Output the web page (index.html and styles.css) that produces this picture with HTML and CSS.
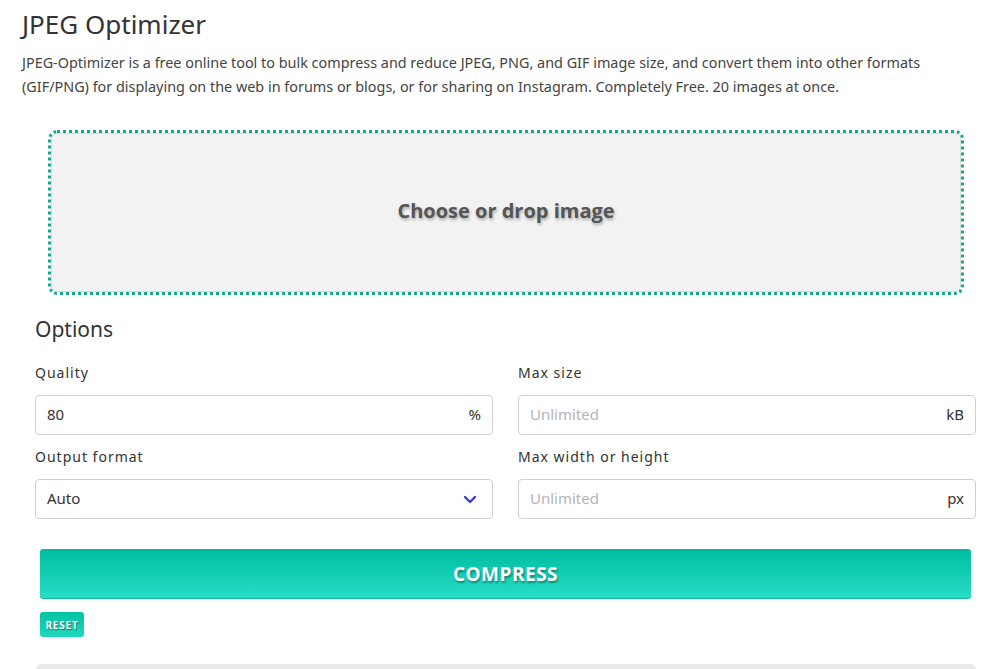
FILE: index.html
```html
<!DOCTYPE html>
<html lang="en">
<head>
  <meta charset="UTF-8">
  <meta name="viewport" content="width=device-width, initial-scale=1.0">
  <title>JPEG Optimizer</title>
  <link rel="stylesheet" href="styles.css">
</head>
<body>
  <div class="page">
    <div class="intro">
      <h1>JPEG Optimizer</h1>
      <p>JPEG-Optimizer is a free online tool to bulk compress and reduce JPEG, PNG, and GIF image size, and convert them into other formats (GIF/PNG) for displaying on the web in forums or blogs, or for sharing on Instagram. Completely Free. 20 images at once.</p>
    </div>

    <div class="drop-wrap">
      <label class="drop-zone">
        <span>Choose or drop image</span>
      </label>
    </div>

    <div class="options">
      <h2>Options</h2>
      <div class="grid">
        <div class="field">
          <label>Quality</label>
          <div class="input-box">
            <input type="text" value="80">
            <span class="unit">%</span>
          </div>
        </div>
        <div class="field">
          <label>Max size</label>
          <div class="input-box">
            <input type="text" placeholder="Unlimited">
            <span class="unit">kB</span>
          </div>
        </div>
        <div class="field">
          <label>Output format</label>
          <div class="input-box">
            <span class="select-value">Auto</span>
            <svg class="chevron" width="14" height="9" viewBox="0 0 14 9">
              <path d="M2 2 L7 7 L12 2" fill="none" stroke="#3a3fc4" stroke-width="2.4" stroke-linecap="round" stroke-linejoin="round"/>
            </svg>
          </div>
        </div>
        <div class="field">
          <label>Max width or height</label>
          <div class="input-box">
            <input type="text" placeholder="Unlimited">
            <span class="unit">px</span>
          </div>
        </div>
      </div>

      <button class="btn-compress">COMPRESS</button>
      <button class="btn-reset">RESET</button>
    </div>

    <div class="results"></div>
  </div>
</body>
</html>
```

FILE: styles.css
```css
body {
  margin: 0;
  font-family: "Noto Sans", "Noto Sans CJK KR", sans-serif;
  color: #333;
  background-color: white;
  overflow: hidden;
}
.page {
  width: 996px;
}
.intro {
  padding: 7px 20px 0 22px;
}
.intro h1 {
  margin: 0;
  font-size: 26px;
  font-weight: 400;
  line-height: 34px;
  color: #333;
}
.intro p {
  margin: 10px 0 0 0;
  font-size: 14.4px;
  line-height: 24px;
  color: #444;
}
.drop-wrap {
  padding: 34px 35px 0 51px;
}
.drop-zone {
  display: flex;
  justify-content: center;
  align-items: center;
  height: 157px;
  background-color: #f2f2f2;
  border: 1px solid #dcdcdc;
  border-radius: 6px;
  outline: 3px dotted #13a88b;
  outline-offset: 0;
  cursor: pointer;
}
.drop-zone span {
  font-family: "Open Sans", sans-serif;
  font-size: 20px;
  font-weight: 700;
  color: #555;
  margin-bottom: 4px;
  text-shadow: 1px 2px 3px rgba(0, 0, 0, 0.3);
}
.options {
  padding: 22px 20px 0 35px;
}
.options h2 {
  margin: 0;
  font-size: 21px;
  font-weight: 400;
  line-height: 30px;
  color: #333;
}
.grid {
  display: grid;
  grid-template-columns: 1fr 1fr;
  column-gap: 25px;
  row-gap: 12px;
  margin-top: 19px;
}
.field label {
  display: block;
  font-size: 14px;
  letter-spacing: 1px;
  line-height: 20px;
  color: #333;
  margin-bottom: 12px;
}
.input-box {
  display: flex;
  align-items: center;
  box-sizing: border-box;
  height: 40px;
  border: 1px solid #d0d0d0;
  border-radius: 4px;
  padding: 0 11px 3px 11px;
  background-color: white;
}
.input-box input {
  flex: 1;
  border: none;
  outline: none;
  font-family: inherit;
  font-size: 15px;
  color: #333;
  padding: 0;
  background: transparent;
}
.input-box input::placeholder {
  color: #b5b5b5;
}
.unit {
  font-size: 15px;
  color: #333;
}
.select-value {
  flex: 1;
  font-size: 15px;
  color: #333;
}
.chevron {
  margin-right: 4px;
  margin-top: 3px;
}
.btn-compress {
  display: block;
  width: 931px;
  height: 50px;
  margin: 30px 0 0 5px;
  border: none;
  border-bottom: 1px solid #12b89b;
  border-radius: 3px;
  background: linear-gradient(to bottom, #00bd9f, #27ddc6);
  color: white;
  font-family: "Open Sans", sans-serif;
  font-size: 19px;
  font-weight: 700;
  letter-spacing: 0.5px;
  text-shadow: 1px 2px 2px rgba(0, 0, 0, 0.35);
  cursor: pointer;
}
.btn-reset {
  display: block;
  width: 44px;
  height: 25px;
  margin: 13px 0 0 5px;
  padding: 0;
  border: none;
  border-radius: 3px;
  background: linear-gradient(to bottom, #07c2a4, #1fd6bd);
  color: white;
  font-family: "Open Sans", sans-serif;
  font-size: 10px;
  font-weight: 700;
  letter-spacing: 0.8px;
  text-shadow: 1px 1px 1px rgba(0, 0, 0, 0.4);
  cursor: pointer;
}
.results {
  margin: 27px 20px 0 36px;
  height: 5px;
  background-color: #ebebeb;
  border-radius: 5px 5px 0 0;
}
```
